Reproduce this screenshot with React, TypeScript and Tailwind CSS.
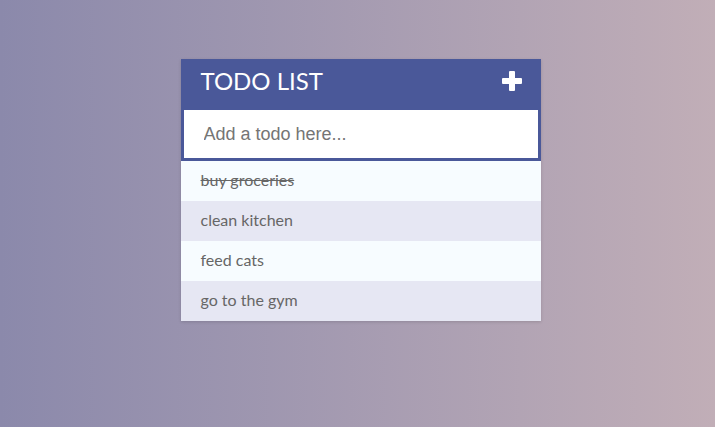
const todos = [
  { text: 'buy groceries', done: true },
  { text: 'clean kitchen', done: false },
  { text: 'feed cats', done: false },
  { text: 'go to the gym', done: false },
];

const App = () => {
  return (
    <div className="min-h-[427px] w-full bg-gradient-to-r from-[#8b89ab] to-[#c1aeb7] pl-[6px] pt-[59px]">
      <div className="mx-auto w-[360px] shadow-[0_1px_3px_rgba(0,0,0,0.15)] font-['Lato',sans-serif]">
        {/* Header */}
        <div className="flex h-[51px] items-center justify-between bg-[#4a5899] pb-[8px] pl-5 pr-[19px]">
          <h1 className="text-[24px] font-normal leading-none text-white">TODO LIST</h1>
          <svg width="20" height="20" viewBox="0 0 20 20" className="text-white">
            <rect x="7" y="0" width="6" height="20" rx="1" fill="currentColor" />
            <rect x="0" y="7" width="20" height="6" rx="1" fill="currentColor" />
          </svg>
        </div>

        {/* Input */}
        <input
          type="text"
          placeholder="Add a todo here..."
          autoFocus
          className="block h-[51px] w-full border-[3px] border-t-0 border-[#4a5899] bg-white pl-[20px] font-['Liberation_Sans',Arial,sans-serif] text-[18px] text-[#666] caret-[#4a5899] outline-none placeholder:text-[#757575]"
        />

        {/* Items */}
        <ul>
          {todos.map((todo, i) => (
            <li
              key={i}
              className={`flex h-10 items-center pb-[2px] pl-5 text-[16px] text-[#666] ${
                i % 2 === 0 ? 'bg-[#f7fcff]' : 'bg-[#e6e7f3]'
              } ${todo.done ? 'line-through' : ''}`}
            >
              {todo.text}
            </li>
          ))}
        </ul>
      </div>
    </div>
  );
};

export default App;
